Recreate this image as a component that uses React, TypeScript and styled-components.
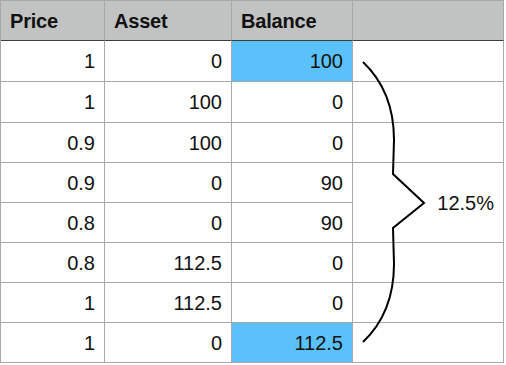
import { Fragment } from "react";
import styled, { createGlobalStyle } from "styled-components";

const GlobalStyle = createGlobalStyle`
  body {
    margin: 0;
    background: #ffffff;
    font-family: "Liberation Sans", Arial, Helvetica, sans-serif;
    color: #111;
  }
`;

const Wrapper = styled.div`
  position: relative;
  width: 504px;
`;

const Sheet = styled.div`
  display: grid;
  grid-template-columns: 104px 127px 121px 151px;
  grid-template-rows: 40px 41px 41px repeat(6, 40px);
  border-top: 1px solid #a8a8a8;
  border-left: 1px solid #a8a8a8;
  width: max-content;
`;

const HeadCell = styled.div`
  display: flex;
  align-items: center;
  padding: 1px 8px 0 9px;
  background: #c1c3c2;
  border-right: 1px solid #a8a8a8;
  border-bottom: 1px solid #3e3e3e;
  font-size: 20px;
  font-weight: bold;
  letter-spacing: -0.2px;
`;

const Cell = styled.div<{ $hl?: boolean; $span?: number }>`
  display: flex;
  align-items: center;
  justify-content: flex-end;
  padding: 1px 9px 0 8px;
  background: ${(p) => (p.$hl ? "#5ac1fa" : "#ffffff")};
  border-right: 1px solid #a8a8a8;
  border-bottom: 1px solid #a8a8a8;
  font-size: 20px;
  grid-row: ${(p) => (p.$span ? `span ${p.$span}` : "auto")};
`;

const Brace = styled.svg`
  position: absolute;
  left: 0;
  top: 0;
  pointer-events: none;
`;

interface IRow {
  price: string;
  asset: string;
  balance: string;
  hl?: boolean;
}

const rows: IRow[] = [
  { price: "1", asset: "0", balance: "100", hl: true },
  { price: "1", asset: "100", balance: "0" },
  { price: "0.9", asset: "100", balance: "0" },
  { price: "0.9", asset: "0", balance: "90" },
  { price: "0.8", asset: "0", balance: "90" },
  { price: "0.8", asset: "112.5", balance: "0" },
  { price: "1", asset: "112.5", balance: "0" },
  { price: "1", asset: "0", balance: "112.5", hl: true },
];

function App() {
  return (
    <>
      <GlobalStyle />
      <Wrapper>
        <Sheet>
          <HeadCell>Price</HeadCell>
          <HeadCell>Asset</HeadCell>
          <HeadCell>Balance</HeadCell>
          <HeadCell />
          {rows.map((row, i) => (
            <Fragment key={i}>
              <Cell>{row.price}</Cell>
              <Cell>{row.asset}</Cell>
              <Cell $hl={row.hl}>{row.balance}</Cell>
              {/* the 4th column merges rows 4 and 5 for the label */}
              {i === 3 && <Cell $span={2}>12.5%</Cell>}
              {i !== 3 && i !== 4 && <Cell />}
            </Fragment>
          ))}
        </Sheet>
        <Brace width="504" height="364" viewBox="0 0 504 364">
          <path
            d="M363 62 C382 80 394 104 394 140 L393 174 L424 203 L393 228 L394 264 C394 300 382 324 363 342"
            fill="none"
            stroke="#000"
            strokeWidth="2"
          />
        </Brace>
      </Wrapper>
    </>
  );
}

export default App;
